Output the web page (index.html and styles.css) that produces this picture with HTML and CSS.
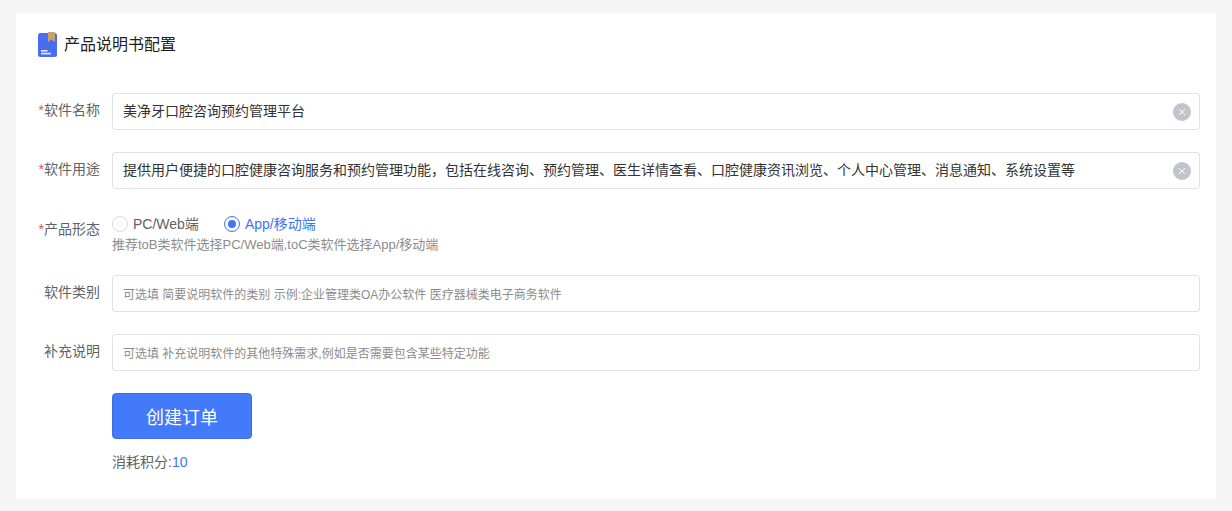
FILE: index.html
```html
<!DOCTYPE html>
<html lang="zh-CN">
<head>
<meta charset="utf-8">
<title>产品说明书配置</title>
<link rel="stylesheet" href="styles.css">
</head>
<body>
<main class="card">
  <header class="head">
    <svg class="book" width="19" height="25" viewBox="0 0 19 25">
      <rect y="1" width="19" height="24" rx="2.5" fill="#4a6cf0"/>
      <path d="M10 0h7v10l-3.5-2.4L10 10z" fill="#c9a46a"/>
      <rect x="3" y="18" width="6.5" height="1.6" fill="#e6ebff"/>
      <rect x="3" y="20.8" width="10" height="1.6" fill="#e6ebff"/>
    </svg>
    <h1 class="title">产品说明书配置</h1>
  </header>
  <form class="form">
    <div class="row">
      <label class="label"><span class="req">*</span>软件名称</label>
      <div class="input"><span class="value">美净牙口腔咨询预约管理平台</span><span class="clear"><svg width="8" height="8" viewBox="0 0 8 8"><path d="M1 1l6 6M7 1L1 7" stroke="#fff" stroke-width="1"/></svg></span></div>
    </div>
    <div class="row">
      <label class="label"><span class="req">*</span>软件用途</label>
      <div class="input"><span class="value">提供用户便捷的口腔健康咨询服务和预约管理功能，包括在线咨询、预约管理、医生详情查看、口腔健康资讯浏览、个人中心管理、消息通知、系统设置等</span><span class="clear"><svg width="8" height="8" viewBox="0 0 8 8"><path d="M1 1l6 6M7 1L1 7" stroke="#fff" stroke-width="1"/></svg></span></div>
    </div>
    <div class="row row-radio">
      <label class="label label-radio"><span class="req">*</span>产品形态</label>
      <div class="radio-col">
        <div class="radios">
          <span class="radio"><i class="dot"></i>PC/Web端</span>
          <span class="radio on"><i class="dot"></i>App/移动端</span>
        </div>
        <p class="hint">推荐toB类软件选择PC/Web端,toC类软件选择App/移动端</p>
      </div>
    </div>
    <div class="row">
      <label class="label">软件类别</label>
      <div class="input"><span class="ph">可选填 简要说明软件的类别 示例:企业管理类OA办公软件 医疗器械类电子商务软件</span></div>
    </div>
    <div class="row">
      <label class="label">补充说明</label>
      <div class="input"><span class="ph">可选填 补充说明软件的其他特殊需求,例如是否需要包含某些特定功能</span></div>
    </div>
    <div class="actions">
      <button class="btn" type="button">创建订单</button>
      <p class="cost">消耗积分:<span class="num">10</span></p>
    </div>
  </form>
</main>
</body>
</html>
```
FILE: styles.css
```css
* { box-sizing: border-box; }
html, body { margin: 0; height: 511px; overflow: hidden; }
body {
  background: #f5f5f5;
  padding: 13px 16px 12px;
  font-family: "Liberation Sans", "Noto Sans CJK SC", sans-serif;
  color: #333;
}
.card {
  height: 486px;
  background: #fff;
  border-radius: 4px;
  padding: 19px 16px 0 23px;
}
.head { display: flex; align-items: flex-start; gap: 7px; height: 25px; }
.book { flex: none; margin-left: -1px; }
.title { margin: 2px 0 0; font-size: 16px; font-weight: 400; color: #222; line-height: 22px; }
.form { margin-top: 36px; }
.row { display: flex; margin-bottom: 22px; }
.row-radio { margin-bottom: 21px; }
.label {
  width: 62px;
  margin: 0 12px 0 -1px;
  flex: none;
  padding-bottom: 2px;
  font-size: 14px;
  line-height: 35px;
  color: #606266;
  text-align: right;
  white-space: nowrap;
}
.label-radio { line-height: 20px; padding: 8px 0 0; }
.req { color: #d9534f; }
.input {
  flex: 1;
  height: 37px;
  display: flex;
  align-items: center;
  justify-content: space-between;
  padding: 0 17px 0 10px;
  border: 1px solid #e2e2e2;
  border-radius: 3px;
  background: #fff;
}
.value { font-size: 14px; line-height: 20px; padding-bottom: 2px; color: #333; }
.ph { font-size: 12px; color: #8c8c8c; }
.clear {
  width: 18px;
  height: 18px;
  margin-right: -9px;
  border-radius: 50%;
  background: #c0c4cc;
  display: flex;
  align-items: center;
  justify-content: center;
}
.radio-col { flex: 1; }
.radios { display: flex; gap: 25px; height: 20px; margin-top: 3px; }
.radio { display: flex; align-items: center; gap: 5px; font-size: 14px; color: #606266; line-height: 20px; }
.dot {
  width: 16px;
  height: 16px;
  border-radius: 50%;
  border: 1px solid #d9d9df;
  background: #fff;
  flex: none;
}
.on { color: #3f74f5; }
.on .dot { border-color: #3f74f5; display: flex; align-items: center; justify-content: center; }
.on .dot::after { content: ""; width: 8px; height: 8px; border-radius: 50%; background: #3f74f5; }
.hint { margin: 2px 0 0; font-size: 13px; line-height: 18px; color: #8c8c8c; }
.actions { padding-left: 73px; }
.btn {
  display: block;
  width: 140px;
  height: 46px;
  border: 1px solid #3f6ee0;
  border-radius: 4px;
  background: #4379fb;
  color: #fff;
  font: 400 18px "Liberation Sans", "Noto Sans CJK SC", sans-serif;
}
.cost { margin: 13px 0 0; font-size: 14px; line-height: 20px; color: #606266; }
.num { color: #3f74f5; }
```
